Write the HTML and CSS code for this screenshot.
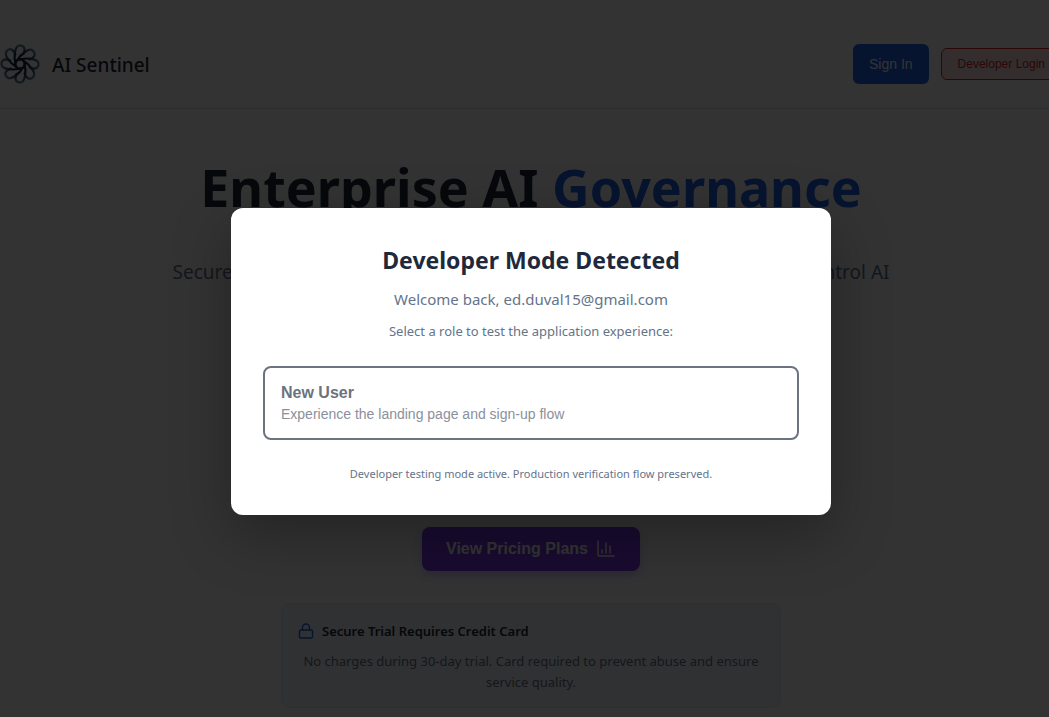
FILE: index.html
```html
<!DOCTYPE html>
<html lang="en">
<head>
<meta charset="utf-8">
<meta name="viewport" content="width=device-width, initial-scale=1">
<title>AI Sentinel</title>
<link rel="stylesheet" href="styles.css">
</head>
<body>
<div class="page">
  <header class="header">
    <div class="brand">
      <svg class="brand-logo" viewBox="0 0 40 40" fill="none" stroke-width="2.2" stroke-linecap="round" aria-hidden="true">
        <defs>
          <radialGradient id="petal" gradientUnits="userSpaceOnUse" cx="20" cy="20" r="20">
            <stop offset="0.4" stop-color="#062536"/>
            <stop offset="0.7" stop-color="#2c5566"/>
            <stop offset="1" stop-color="#6f98a6"/>
          </radialGradient>
          <path id="leaf" d="M15.5 20C13.5 13 14.5 1.4 20 1.4C25 1.4 25.5 6 23.5 10"/>
        </defs>
        <g stroke="url(#petal)">
          <use href="#leaf"/>
          <use href="#leaf" transform="rotate(45 20 20)"/>
          <use href="#leaf" transform="rotate(90 20 20)"/>
          <use href="#leaf" transform="rotate(135 20 20)"/>
          <use href="#leaf" transform="rotate(180 20 20)"/>
          <use href="#leaf" transform="rotate(225 20 20)"/>
          <use href="#leaf" transform="rotate(270 20 20)"/>
          <use href="#leaf" transform="rotate(315 20 20)"/>
          <circle cx="20" cy="20" r="4.6"/>
        </g>
      </svg>
      <span class="brand-name">AI Sentinel</span>
    </div>
    <div class="header-actions">
      <button class="btn-signin" type="button">Sign In</button>
      <button class="btn-dev" type="button">Developer Login</button>
    </div>
  </header>

  <main class="hero">
    <h1 class="hero-title">Enterprise AI <span class="accent">Governance</span></h1>
    <p class="hero-text">Secure, monitor, and optimize your AI usage with full enterprise-grade control AI</p>
    <button class="btn-pricing" type="button">View Pricing Plans
      <svg class="icon-chart" viewBox="0 0 20 20" fill="none" stroke="currentColor" stroke-width="1.5" stroke-linecap="round" stroke-linejoin="round" aria-hidden="true">
        <path d="M2 2v14a1 1 0 0 0 1 1h15M6 14v-3M10 14V4M14 14V7"/>
      </svg>
    </button>
    <section class="notice">
      <h2 class="notice-title">
        <svg class="icon-lock" viewBox="0 0 16 16" fill="none" stroke="currentColor" stroke-width="1.4" stroke-linecap="round" stroke-linejoin="round" aria-hidden="true">
          <rect x="1.5" y="7" width="13" height="8" rx="1.2"/>
          <path d="M4.5 7V4.5a3.5 3.5 0 0 1 7 0V7"/>
        </svg>
        Secure Trial Requires Credit Card
      </h2>
      <p class="notice-text">No charges during 30-day trial. Card required to prevent abuse and ensure service quality.</p>
    </section>
  </main>

  <div class="overlay">
    <div class="modal" role="dialog" aria-modal="true" aria-labelledby="modal-title">
      <h2 class="modal-title" id="modal-title">Developer Mode Detected</h2>
      <p class="modal-welcome">Welcome back, ed.duval15@gmail.com</p>
      <p class="modal-hint">Select a role to test the application experience:</p>
      <button class="role" type="button">
        <span class="role-name">New User</span>
        <span class="role-text">Experience the landing page and sign-up flow</span>
      </button>
      <p class="modal-note">Developer testing mode active. Production verification flow preserved.</p>
    </div>
  </div>
</div>
</body>
</html>
```

FILE: styles.css
```css
* { box-sizing: border-box; }

body {
  margin: 0;
  overflow: hidden;
  background: #fff;
  color: #1e293b;
  font-family: "Noto Sans", "Open Sans", sans-serif;
}

h1, h2, p { margin: 0; }

button { font-family: "Liberation Sans", Arial, sans-serif; cursor: pointer; }

.page {
  position: relative;
  width: calc(100% + 13px);
  height: 100vh;
  overflow: hidden;
}

.header {
  display: flex;
  align-items: center;
  justify-content: space-between;
  padding: 44px 0 24px;
  border-bottom: 1px solid #d3d9e2;
}

.brand { display: flex; align-items: center; gap: 12px; }
.brand-logo { width: 40px; height: 40px; }
.brand-name { padding-top: 2px; font-size: 19px; font-weight: 500; line-height: 28px; }

.header-actions { display: flex; align-items: center; gap: 12px; }

.btn-signin {
  height: 40px;
  padding: 0 16px;
  border: 0;
  border-radius: 6px;
  background: #2563eb;
  color: #fff;
  font-size: 14px;
}

.btn-dev {
  height: 32px;
  padding: 0 16px;
  border: 1px solid #dc2626;
  border-radius: 6px;
  background: #fee2e2;
  color: #dc2626;
  font-size: 12px;
}

.hero {
  display: flex;
  flex-direction: column;
  align-items: center;
  padding-top: 46px;
  text-align: center;
}

.hero-title { font-size: 52px; font-weight: 700; line-height: 64px; white-space: nowrap; }
.accent { color: #2563eb; }

.hero-text {
  height: 272px;
  margin-top: 36px;
  color: #64748b;
  font-size: 19px;
  line-height: 34px;
  white-space: nowrap;
}

.btn-pricing {
  display: flex;
  align-items: center;
  gap: 8px;
  height: 44px;
  padding: 0 24px;
  border: 0;
  border-radius: 8px;
  background: #7c3aed;
  color: #fff;
  font-size: 16px;
  font-weight: 700;
  box-shadow: 0 4px 12px rgba(124, 58, 237, 0.3);
}

.icon-chart { width: 20px; height: 20px; }

.notice {
  width: 500px;
  margin-top: 32px;
  padding: 15px 16px 14px;
  border: 1px solid #e2e8f0;
  border-radius: 8px;
  background: #f1f5f9;
}

.notice-title {
  display: flex;
  align-items: center;
  gap: 8px;
  margin-bottom: 8px;
  font-size: 13px;
  font-weight: 600;
  line-height: 24px;
}

.icon-lock { width: 16px; height: 16px; color: #2563eb; }
.notice-text { color: #64748b; font-size: 13px; line-height: 21px; }

.overlay {
  position: absolute;
  inset: 0;
  display: flex;
  align-items: center;
  justify-content: center;
  padding-top: 6px;
  background: rgba(0, 0, 0, 0.8);
}

.modal {
  width: 600px;
  padding: 32px;
  border-radius: 12px;
  background: #fff;
  text-align: center;
  box-shadow: 0 20px 60px rgba(0, 0, 0, 0.3);
}

.modal-title { font-size: 23px; line-height: 40px; }
.modal-welcome { margin-top: 8px; color: #64748b; font-size: 15px; line-height: 22px; }
.modal-hint { margin-top: 10px; color: #64748b; font-size: 13px; line-height: 22px; }

.role {
  display: flex;
  flex-direction: column;
  gap: 2px;
  width: 100%;
  margin: 24px 0;
  padding: 15px 16px;
  border: 2px solid #6b7280;
  border-radius: 8px;
  background: #fff;
  color: #6b7280;
  text-align: left;
}

.role-name { font-size: 16px; font-weight: 700; line-height: 20px; }
.role-text { font-size: 14px; line-height: 18px; color: #8b909c; }
.modal-note { color: #64748b; font-size: 11px; line-height: 19px; }
```
